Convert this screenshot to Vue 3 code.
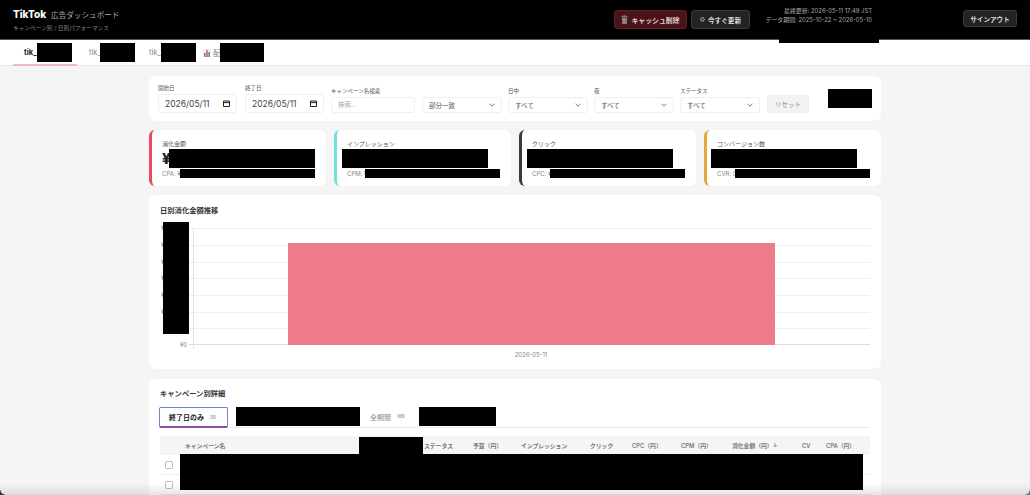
<script setup>
const kpis = [
  { label: '消化金額', sub: 'CPA: ¥', color: '#e8495f', prefix: '¥' },
  { label: 'インプレッション', sub: 'CPM: ¥', color: '#6fe0e0', prefix: '' },
  { label: 'クリック', sub: 'CPC: ¥', color: '#3a3a3a', prefix: '' },
  { label: 'コンバージョン数', sub: 'CVR: 0', color: '#e4a83a', prefix: '' },
]
const selects = [
  { label: '日中', value: 'すべて' },
  { label: '夜', value: 'すべて' },
  { label: 'ステータス', value: 'すべて' },
]
const columns = [
  { name: 'キャンペーン名', width: 239 },
  { name: 'ステータス', width: 49 },
  { name: '予算（円）', width: 48 },
  { name: 'インプレッション', width: 69 },
  { name: 'クリック', width: 42 },
  { name: 'CPC（円）', width: 49 },
  { name: 'CPM（円）', width: 51 },
  { name: '消化金額（円）↓', width: 70 },
  { name: 'CV', width: 24 },
  { name: 'CPA（円）', width: 44 },
]
const gridY = [228, 245, 262, 278, 295, 312, 328]
</script>

<template>
  <div class="page">
    <header class="topbar">
      <div class="brand">
        <div class="brand-line"><strong>TikTok</strong><span>広告ダッシュボード</span></div>
        <div class="brand-sub">キャンペーン別 / 日別パフォーマンス</div>
      </div>
      <div class="actions">
        <button class="btn-dark btn-danger">
          <svg width="7" height="9" viewBox="0 0 7 9"><path d="M0 1.2h7v.8H0zM2.4.2h2.2v1H2.4zM.8 2.4h5.4L5.8 9H1.2z" fill="#8a7f80"/></svg>
          キャッシュ削除
        </button>
        <button class="btn-dark">
          <svg width="5" height="5" viewBox="0 0 5 5"><circle cx="2.5" cy="2.5" r="1.7" fill="none" stroke="#ccc" stroke-width=".9"/></svg>
          今すぐ更新
        </button>
      </div>
      <div class="info">
        <div>最終更新: 2026-05-11 17:49 JST</div>
        <div>データ期間: 2025-10-22 ~ 2026-05-10</div>
      </div>
      <button class="btn-dark btn-signout">サインアウト</button>
      <div class="mask mask-header"></div>
    </header>

    <nav class="tabs">
      <div class="tab active">tik_<span class="mask tab-mask"></span></div>
      <div class="tab">tik_<span class="mask tab-mask"></span></div>
      <div class="tab">tik_<span class="mask tab-mask"></span></div>
      <div class="tab tab-last">
        <svg width="8" height="8" viewBox="0 0 8 8"><rect width="8" height="8" fill="#e9eef2"/><rect x="1" y="4" width="1.6" height="4" fill="#5a8fc0"/><rect x="3.2" y="1" width="1.6" height="7" fill="#d0694f"/><rect x="5.4" y="3" width="1.6" height="5" fill="#5f9e5a"/></svg>
        配<span class="mask tab-mask-wide"></span>
      </div>
    </nav>

    <main class="content">
      <section class="card filters">
        <div class="field date-field">
          <label>開始日</label>
          <div class="control date">2026/05/11
            <svg width="7" height="7" viewBox="0 0 7 7"><path d="M.5 1h6v5.5h-6z M.5 1v1.6h6V1" fill="none" stroke="#222" stroke-width="1"/></svg>
          </div>
        </div>
        <div class="field date-field">
          <label>終了日</label>
          <div class="control date">2026/05/11
            <svg width="7" height="7" viewBox="0 0 7 7"><path d="M.5 1h6v5.5h-6z M.5 1v1.6h6V1" fill="none" stroke="#222" stroke-width="1"/></svg>
          </div>
        </div>
        <div class="field search-field">
          <label>キャンペーン名検索</label>
          <input class="control search" type="text" placeholder="検索..." />
        </div>
        <div class="field match-field">
          <div class="control select">部分一致
            <svg width="6" height="4" viewBox="0 0 6 4"><path d="M.5.7 3 3.2 5.5.7" fill="none" stroke="#555" stroke-width=".8"/></svg>
          </div>
        </div>
        <div class="field select-field" v-for="s in selects" :key="s.label">
          <label>{{ s.label }}</label>
          <div class="control select">{{ s.value }}
            <svg width="6" height="4" viewBox="0 0 6 4"><path d="M.5.7 3 3.2 5.5.7" fill="none" stroke="#555" stroke-width=".8"/></svg>
          </div>
        </div>
        <button class="reset">リセット</button>
        <div class="mask filter-mask"></div>
      </section>

      <section class="kpis">
        <div class="card kpi" v-for="k in kpis" :key="k.label" :style="{ borderLeftColor: k.color }">
          <div class="kpi-label">{{ k.label }}</div>
          <div class="kpi-value">{{ k.prefix }}<span class="mask kpi-mask"></span></div>
          <div class="kpi-sub"><span class="kpi-sub-label">{{ k.sub }}</span><span class="mask kpi-sub-mask"></span></div>
        </div>
      </section>

      <section class="card chart-card">
        <h3>日別消化金額推移</h3>
        <svg class="chart" width="732" height="145" viewBox="149 222 732 145">
          <line v-for="y in gridY" :key="y" x1="189" x2="870" :y1="y + 0.5" :y2="y + 0.5" stroke="#efefef" stroke-width="1" />
          <line x1="193.5" x2="193.5" y1="228" y2="349" stroke="#e2e2e2" />
          <line x1="189" x2="870" y1="344.5" y2="344.5" stroke="#dedede" />
          <rect x="288" y="243" width="487" height="102" fill="#ee7b8a" />
          <text v-for="y in gridY.slice(0, 6)" :key="'t' + y" x="161" :y="y + 2" class="tick">¥</text>
          <text x="187" y="347" text-anchor="end" class="tick">¥0</text>
          <text x="531" y="357" text-anchor="middle" class="tick">2026-05-11</text>
          <rect x="163" y="222" width="26" height="112" fill="#000" />
        </svg>
      </section>

      <section class="card table-card">
        <h3>キャンペーン別詳細</h3>
        <div class="range-tabs">
          <div class="range active">終了日のみ <small>30</small></div>
          <span class="mask range-mask-a"></span>
          <div class="range range-all">全期間 <small>169</small></div>
          <span class="mask range-mask-b"></span>
        </div>
        <div class="table-wrap">
          <table>
            <colgroup>
              <col style="width: 25px" />
              <col v-for="c in columns" :key="c.name" :style="{ width: c.width + 'px' }" />
            </colgroup>
            <thead>
              <tr>
                <th></th>
                <th v-for="c in columns" :key="c.name">{{ c.name }}</th>
              </tr>
            </thead>
            <tbody>
              <tr v-for="n in 2" :key="n">
                <td><input type="checkbox" class="check" /></td>
                <td colspan="10"></td>
              </tr>
            </tbody>
          </table>
          <div class="mask head-mask"></div>
          <div class="mask rows-mask"></div>
        </div>
      </section>
    </main>
    <div class="window-fade"></div>
    <div class="corner corner-left"></div>
    <div class="corner corner-right"></div>
  </div>
</template>

<style>
html, body {
  margin: 0;
  height: 100%;
  overflow: hidden;
  background: #f5f5f5;
}
</style>

<style scoped>
.page {
  position: relative;
  height: 495px;
  overflow: hidden;
  background: #f5f5f5;
  font-family: Inter, "Noto Sans CJK JP", sans-serif;
  color: #333;
}

.mask {
  background: #000;
}

.topbar {
  position: relative;
  height: 40px;
  box-sizing: border-box;
  background: #000;
  border-bottom: 1px solid #555;
  display: flex;
  align-items: center;
  padding: 0 13px;
}
.brand {
  flex: 1;
}
.brand-line {
  display: flex;
  align-items: baseline;
  gap: 5px;
  color: #aaa;
  font-size: 7.6px;
  line-height: 12px;
}
.brand-line strong {
  color: #fff;
  font-size: 10px;
  font-weight: 800;
}
.brand-sub {
  margin-top: 2px;
  color: #888;
  font-size: 5.7px;
  line-height: 8px;
}
.actions {
  display: flex;
  gap: 4px;
}
.btn-dark {
  display: flex;
  align-items: center;
  justify-content: center;
  gap: 3px;
  height: 19px;
  width: 59px;
  padding: 0;
  box-sizing: border-box;
  background: #232323;
  border: 1px solid #3a3a3a;
  border-radius: 3px;
  color: #ddd;
  font-family: inherit;
  font-size: 6.6px;
  font-weight: 700;
}
.btn-danger {
  width: 73px;
  font-size: 6.9px;
  background: #4a1219;
  border-color: #5a2027;
  color: #e6cfd1;
}
.info {
  width: 107px;
  margin-left: 15px;
  text-align: right;
  color: #aaa;
  font-size: 5.9px;
  line-height: 9.5px;
  margin-top: -9px;
  white-space: nowrap;
}
.btn-signout {
  width: 54px;
  height: 17px;
  margin-left: 91px;
  margin-top: -2px;
}
.mask-header {
  position: absolute;
  left: 779px;
  top: 39px;
  width: 100px;
  height: 4px;
  z-index: 1;
}

.tabs {
  display: flex;
  height: 25px;
  background: #fff;
  border-bottom: 1px solid #e6e6e6;
  padding-left: 13px;
  font-size: 7.5px;
  color: #888;
}
.tab {
  display: flex;
  align-items: center;
  width: 65px;
  padding-left: 11px;
  box-sizing: border-box;
}
.tab.active {
  color: #222;
  font-weight: 700;
  border-bottom: 2px solid #f0b8bf;
  height: 26px;
  width: 64px;
  margin-right: 12px;
}
.tab-mask {
  width: 35px;
  height: 19px;
}
.tab:nth-child(2) {
  padding-left: 0;
  width: 60px;
}
.tab:nth-child(2) .tab-mask {
  margin-left: -1px;
}
.tab:nth-child(3) {
  padding-left: 0;
  width: 54px;
}
.tab-last {
  gap: 2px;
  padding-left: 0;
  width: auto;
  font-size: 7.5px;
}
.tab-mask-wide {
  width: 44px;
  height: 19px;
  margin-left: -3px;
}

.content {
  width: 732px;
  margin: 10px 0 0 149px;
  display: flex;
  flex-direction: column;
  gap: 9px;
}
.card {
  background: #fff;
  border-radius: 6px;
  box-shadow: 0 0 2px rgba(0, 0, 0, 0.04);
}

.filters {
  position: relative;
  height: 45px;
  box-sizing: border-box;
  display: flex;
  align-items: flex-end;
  gap: 7px;
  padding: 0 9px 8px;
  border-radius: 6px;
}
.field {
  display: flex;
  flex-direction: column;
  gap: 2px;
}
.field label {
  color: #555;
  font-size: 5.5px;
  line-height: 8px;
}
.control {
  box-sizing: border-box;
  height: 16px;
  border: 1px solid #f0f0f0;
  border-radius: 3px;
  background: #fff;
  color: #555;
  font-family: inherit;
  font-size: 6.5px;
  display: flex;
  align-items: center;
  justify-content: space-between;
  padding: 0 6px;
}
.date-field .control {
  width: 79px;
  height: 19px;
  font-size: 8.5px;
  color: #444;
}
.date-field + .date-field {
  margin-left: 1px;
}
.search-field .control {
  width: 84px;
  outline: none;
}
.search::placeholder {
  color: #aaa;
}
.match-field {
  margin-right: -1px;
}
.match-field .control,
.select-field .control {
  width: 80px;
}
.select-field + .select-field {
  margin-left: -1px;
}
.reset {
  width: 42px;
  height: 18px;
  border: 1px solid #eee;
  border-radius: 3px;
  background: #f3f3f3;
  color: #888;
  font-family: inherit;
  font-size: 6.5px;
  padding: 0;
}
.filter-mask {
  position: absolute;
  left: 679px;
  top: 13px;
  width: 44px;
  height: 19px;
}

.kpis {
  display: grid;
  grid-template-columns: repeat(4, 1fr);
  gap: 8px;
}
.kpi {
  height: 56px;
  box-sizing: border-box;
  border-left: 3px solid #000;
  padding: 9px 10px 0;
}
.kpi-label {
  color: #555;
  font-size: 6px;
  line-height: 9px;
}
.kpi-value {
  display: flex;
  margin-left: -5px;
  margin-top: 1px;
  height: 19px;
  font-size: 15px;
  font-weight: 800;
  line-height: 19px;
  color: #222;
}
.kpi:first-child .kpi-value {
  margin-left: 0;
}
.kpi:first-child .kpi-mask {
  margin-left: -2px;
}
.kpi:last-child .kpi-value {
  margin-left: -6px;
}
.kpi-mask {
  width: 146px;
  height: 19px;
}
.kpi-sub {
  display: flex;
  align-items: center;
  margin-top: 1px;
  height: 9px;
  color: #888;
  font-size: 6px;
}
.kpi-sub-label {
  flex: none;
  width: 18px;
  white-space: nowrap;
}
.kpi-sub-mask {
  position: relative;
  width: 135px;
  height: 9px;
}

.chart-card {
  height: 174px;
  overflow: hidden;
  padding-top: 11px;
  box-sizing: border-box;
}
h3 {
  margin: 0 0 0 11px;
  color: #333;
  font-size: 7.3px;
  line-height: 10px;
  font-weight: 700;
}
.chart-card h3 {
  margin-top: 0;
}
.chart {
  display: block;
  margin-top: 6px;
}
.tick {
  fill: #888;
  font-size: 6px;
  font-family: Inter, sans-serif;
}

.table-card {
  margin-top: 1px;
  padding: 10px 11px 0;
  height: 200px;
}
.table-card h3 {
  margin: 0;
}
.range-tabs {
  display: flex;
  align-items: flex-start;
  height: 20px;
  margin-top: 8px;
  border-bottom: 1px solid #e8e8e8;
  font-size: 7px;
}
.range {
  display: flex;
  align-items: center;
  gap: 6px;
  height: 19px;
  color: #888;
}
.range small {
  font-size: 4.5px;
  font-weight: 600;
  color: #999;
}
.range-all {
  box-sizing: border-box;
  width: 59px;
  padding-left: 10px;
}
.range.active {
  box-sizing: border-box;
  width: 69px;
  height: 21px;
  padding-left: 9px;
  margin: 0 8px 0 -1px;
  color: #222;
  font-weight: 700;
  background: #fff;
  border: 1px solid #6a88c0;
  border-bottom: 2px solid #8a4fa0;
  border-radius: 2px;
}
.range-mask-a {
  width: 124px;
  height: 19px;
}
.range-mask-b {
  width: 77px;
  height: 19px;
}

.table-wrap {
  position: relative;
  margin-top: 8px;
}
table {
  width: 710px;
  table-layout: fixed;
  border-collapse: collapse;
}
th {
  height: 19px;
  padding: 0;
  background: #f5f5f5;
  color: #777;
  font-size: 5.8px;
  font-weight: 600;
  text-align: left;
  white-space: nowrap;
}
td {
  height: 19px;
  padding: 0;
  border-bottom: 1px solid #eee;
}
.check {
  appearance: none;
  display: block;
  box-sizing: border-box;
  width: 8px;
  height: 8px;
  margin: 0 0 0 5px;
  background: #fff;
  border: 1px solid #bbb;
  border-radius: 1.5px;
}
.head-mask {
  position: absolute;
  left: 199px;
  top: 1px;
  width: 64px;
  height: 18px;
}
.rows-mask {
  position: absolute;
  left: 20px;
  top: 18px;
  width: 683px;
  height: 36px;
}
.window-fade {
  position: absolute;
  left: 0;
  right: 0;
  bottom: 0;
  height: 12px;
  background: linear-gradient(to bottom, rgba(0, 0, 0, 0), rgba(0, 0, 0, 0.1));
}
.corner {
  position: absolute;
  bottom: 0;
  width: 5px;
  height: 5px;
}
.corner-left {
  left: 0;
  background: radial-gradient(circle at 100% 0, transparent 4px, #333 5px);
}
.corner-right {
  right: 0;
  background: radial-gradient(circle at 0 0, transparent 4px, #777 5px);
}
</style>
